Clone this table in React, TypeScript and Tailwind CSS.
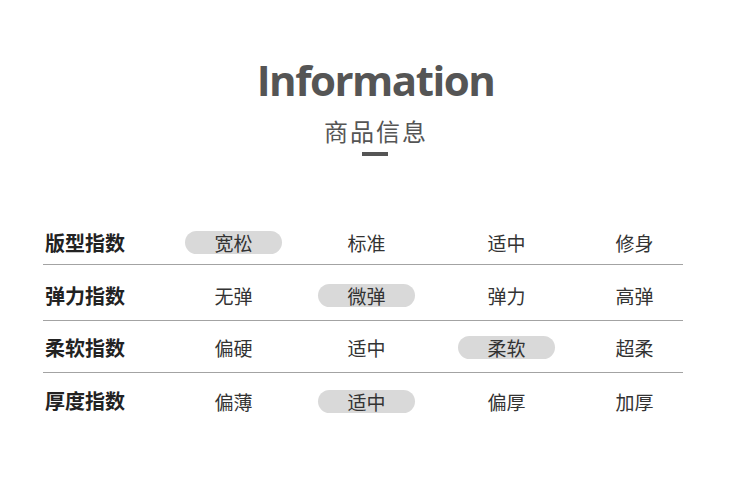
import React from "react";

type Row = { label: string; values: string[]; active: number; h: string; pt: string; border: boolean };

const rows: Row[] = [
  { label: "版型指数", values: ["宽松", "标准", "适中", "修身"], active: 0, h: "h-[44px]", pt: "pt-0", border: true },
  { label: "弹力指数", values: ["无弹", "微弹", "弹力", "高弹"], active: 1, h: "h-[56px]", pt: "pt-[6px]", border: true },
  { label: "柔软指数", values: ["偏硬", "适中", "柔软", "超柔"], active: 2, h: "h-[52px]", pt: "pt-[2px]", border: true },
  { label: "厚度指数", values: ["偏薄", "适中", "偏厚", "加厚"], active: 1, h: "h-[56px]", pt: "pt-0", border: false },
];

const margins = ["ml-0", "ml-[36px]", "ml-[43px]", "ml-[31px]"];

export default function App() {
  return (
    <div
      className="w-[750px] h-[483px] bg-white overflow-hidden"
      style={{ fontFamily: '"Noto Sans CJK SC", "Open Sans", sans-serif' }}
    >
      <div className="flex flex-col items-center pt-[59px]">
        <div className="h-[42px] pl-[1px] text-[42px] leading-none font-bold tracking-[-1.5px] text-[#555555] font-['Open_Sans',sans-serif]">
          Information
        </div>
        <div className="mt-[18px] h-[24px] pl-[2px] text-[24px] leading-none tracking-[2px] text-[#555555]">
          商品信息
        </div>
        <div className="mt-[9px] w-[26px] h-[4px] bg-[#555555]" />
      </div>
      <div className="pl-[43px] mt-[65px]">
        {rows.map((r) => (
          <div
            key={r.label}
            className={`flex items-center w-[640px] ${r.h} ${r.pt} ${r.border ? "border-b border-[#a3a3a3]" : ""}`}
          >
            <div className="w-[142px] pl-[2px] text-[20px] font-bold text-[#222222] leading-none">{r.label}</div>
            {r.values.map((v, i) => (
              <div
                key={i}
                className={`${margins[i]} w-[97px] h-[23px] flex items-center justify-center rounded-full text-[19px] leading-none text-[#333333] ${
                  i === r.active ? "bg-[#d9d9d9]" : ""
                }`}
              >
                {v}
              </div>
            ))}
          </div>
        ))}
      </div>
    </div>
  );
}
